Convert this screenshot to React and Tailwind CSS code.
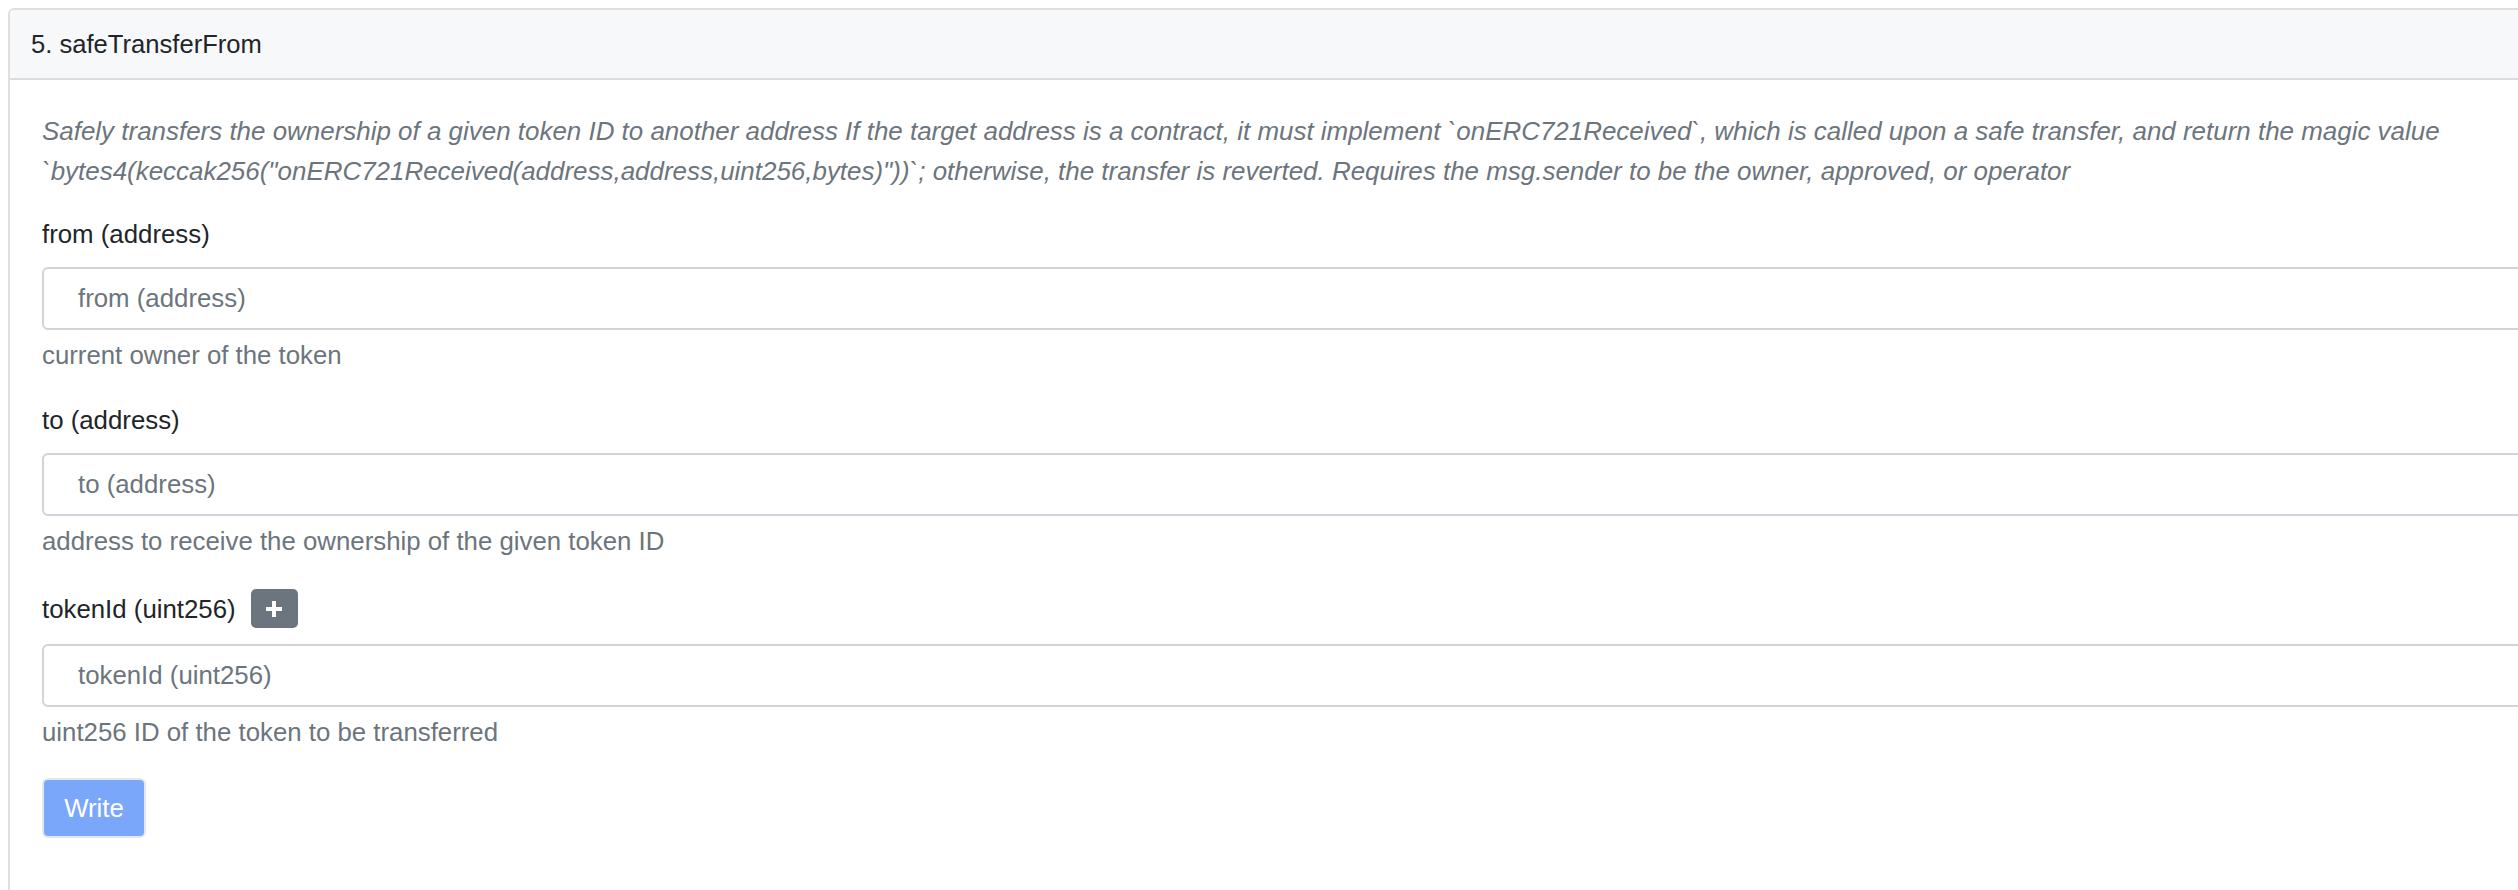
import React from "react";

const font = { fontFamily: '"Liberation Sans", Arial, sans-serif' };

function Field({ label, placeholder, help, plus }) {
  return (
    <div className="mb-[27px]">
      <div className={plus ? "flex items-center h-[43px] mb-[14px]" : "flex items-center h-[38px] mb-[14px]"}>
        <span className="text-[25.8px] leading-[38px] text-[#212529]">{label}</span>
        {plus && (
          <button className="ml-[15px] w-[47px] h-[39px] rounded-[5px] bg-[#6c757d] flex items-center justify-center">
            <svg width="22" height="22" viewBox="0 0 22 22">
              <path d="M11 3v16M3 11h16" stroke="#fff" strokeWidth="4" strokeLinecap="butt" />
            </svg>
          </button>
        )}
      </div>
      <input
        className="block w-full h-[63px] border-2 border-[#ced4da] rounded-[6px] pl-[34px] text-[25.8px] text-[#495057] placeholder:text-[#6c757d] outline-none bg-white"
        placeholder={placeholder}
        style={font}
      />
      <div className="mt-[6px] text-[25.8px] leading-[38px] text-[#6c757d]">{help}</div>
    </div>
  );
}

export default function App() {
  return (
    <div className="w-[2518px] h-[890px] overflow-hidden bg-white pt-[8px] pl-[8px]" style={font}>
      <div className="w-[2700px] h-[1000px] border-2 border-[#dfdfdf] rounded-[6px] overflow-hidden">
        <div className="h-[70px] flex items-center pl-[21px] bg-[#f7f8fa] border-b-2 border-[#dcdcdc]">
          <span className="text-[25.6px] text-[#212529]">5. safeTransferFrom</span>
        </div>
        <div className="px-[32px] pt-[31px]">
          <p className="italic text-[25.95px] leading-[40px] text-[#6c757d] mb-[24px] whitespace-nowrap">
            Safely transfers the ownership of a given token ID to another address If the target address is a contract, it must implement `onERC721Received`, which is called upon a safe transfer, and return the magic value
            <br />
            `bytes4(keccak256("onERC721Received(address,address,uint256,bytes)"))`; otherwise, the transfer is reverted. Requires the msg.sender to be the owner, approved, or operator
          </p>
          <Field label="from (address)" placeholder="from (address)" help="current owner of the token" />
          <Field label="to (address)" placeholder="to (address)" help="address to receive the ownership of the given token ID" />
          <Field label="tokenId (uint256)" placeholder="tokenId (uint256)" help="uint256 ID of the token to be transferred" plus />
          <button className="mt-[4px] w-[104px] h-[60px] rounded-[6px] bg-[#7aa7f9] border-2 border-[#e3e8f0] text-white text-[25.8px] flex items-center justify-center">
            Write
          </button>
        </div>
      </div>
    </div>
  );
}
